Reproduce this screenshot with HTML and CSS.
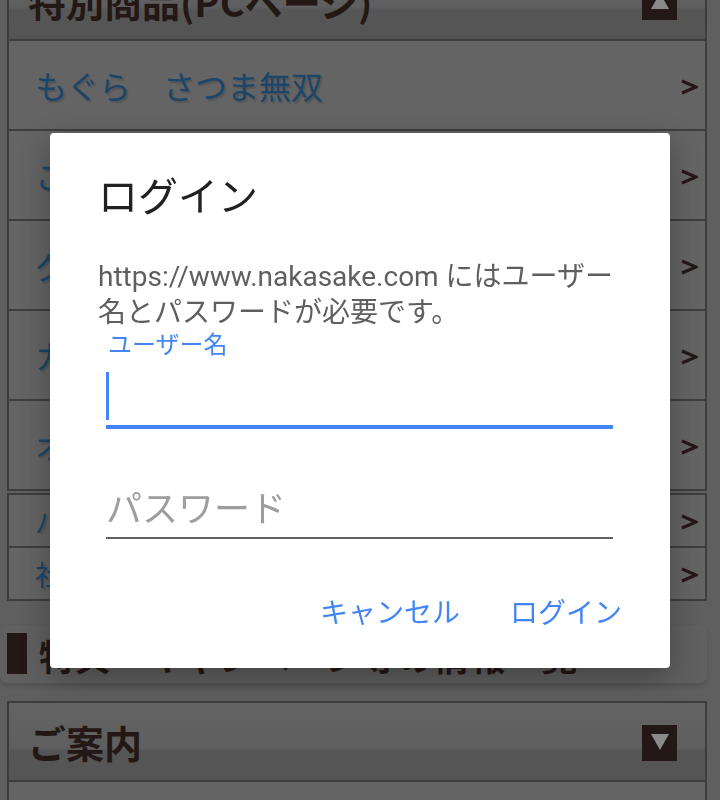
FILE: index.html
```html
<!DOCTYPE html>
<html lang="ja">
<head>
  <meta charset="UTF-8" />
  <meta name="viewport" content="width=device-width, initial-scale=1.0"/>
  <title>ログイン</title>
  <link rel="stylesheet" href="styles.css">
</head>
<body>

  <!-- Page behind the dialog (already dimmed) -->
  <div class="page">
    <section class="menu">
      <div class="menu-head"><h2>特別商品(PCページ)</h2><span class="toggle up"></span></div>
      <a class="menu-row" href="#">もぐら　さつま無双<svg class="chev" viewBox="0 0 18 18"><polyline points="2,3 16,9 2,15"/></svg></a>
      <a class="menu-row" href="#">こだわりの焼酎<svg class="chev" viewBox="0 0 18 18"><polyline points="2,3 16,9 2,15"/></svg></a>
      <a class="menu-row" href="#">グラス・酒器<svg class="chev" viewBox="0 0 18 18"><polyline points="2,3 16,9 2,15"/></svg></a>
      <a class="menu-row" href="#">カタログ<svg class="chev" viewBox="0 0 18 18"><polyline points="2,3 16,9 2,15"/></svg></a>
      <a class="menu-row" href="#">オリジナル商品<svg class="chev" viewBox="0 0 18 18"><polyline points="2,3 16,9 2,15"/></svg></a>
    </section>

    <section class="menu small">
      <a class="menu-row" href="#">バックナンバー<svg class="chev" viewBox="0 0 18 18"><polyline points="2,3 16,9 2,15"/></svg></a>
      <a class="menu-row" href="#">社長のブログ<svg class="chev" viewBox="0 0 18 18"><polyline points="2,3 16,9 2,15"/></svg></a>
    </section>

    <h2 class="section-title">特典・キャンペーン等の情報一覧</h2>

    <section class="menu">
      <div class="menu-head"><h2>ご案内</h2><span class="toggle down"></span></div>
      <a class="menu-row" href="#">会社概要</a>
    </section>
  </div>

  <!-- Login dialog -->
  <div class="overlay">
    <div class="dialog">
      <h1 class="dialog-title">ログイン</h1>
      <p class="dialog-msg">https://www.nakasake.com にはユーザー名とパスワードが必要です。</p>

      <label class="field-label">ユーザー名</label>
      <div class="field focused"><span class="caret"></span></div>

      <div class="field"><span class="placeholder">パスワード</span></div>

      <div class="actions">
        <button class="btn">キャンセル</button>
        <button class="btn">ログイン</button>
      </div>
    </div>
  </div>

</body>
</html>
```

FILE: styles.css
```css
* {
  box-sizing: border-box;
  margin: 0;
  padding: 0;
}

body {
  font-family: "Noto Sans CJK JP", sans-serif;
  background: #5f5f5f;
  height: 800px;
  overflow: hidden;
}

/* page underneath, scrolled a little */
.page {
  margin-top: -40px;
  margin-left: 7px;
  width: 700px;
}

.menu {
  border: 2px solid #3d3d3d;
  background: #646464;
}

.menu.small {
  margin-top: 2px;
}

.menu-head {
  height: 79px;
  display: flex;
  align-items: center;
  justify-content: space-between;
  padding: 0 28px 0 19px;
  background: linear-gradient(#636363 0%, #5f5f5f 58%, #565656 62%, #545454 100%);
  border-bottom: 2px solid #3d3d3d;
}

.menu-head h2 {
  font-size: 38px;
  font-weight: bold;
  color: #231815;
}

.toggle {
  position: relative;
  width: 35px;
  height: 36px;
  background: #231815;
  margin-top: 2px;
}

.toggle::after {
  content: "";
  position: absolute;
  left: 9px;
  top: 9px;
  border-left: 9px solid transparent;
  border-right: 9px solid transparent;
}

.toggle.up::after {
  border-bottom: 16px solid #8a8a8a;
}

.toggle.down::after {
  border-top: 16px solid #8a8a8a;
}

.menu-row {
  display: flex;
  align-items: center;
  justify-content: space-between;
  height: 90px;
  padding: 0 7px 0 26px;
  border-bottom: 2px solid #3d3d3d;
  color: #1b4569;
  font-size: 32px;
  text-decoration: none;
  text-shadow: 2px 2px 1px #565656;
}

.menu-row:last-child {
  border-bottom: none;
  height: 88px;
}

.menu.small .menu-row {
  height: 53px;
  font-size: 28px;
}

.menu.small .menu-row:last-child {
  height: 51px;
}

.chev {
  width: 18px;
  height: 18px;
  margin-top: 3px;
  fill: none;
  stroke: #231815;
  stroke-width: 3;
}

.section-title {
  position: relative;
  margin: 24px 0 16px -7px;
  height: 60px;
  padding: 4px 0 0 39px;
  font-size: 36px;
  font-weight: bold;
  color: #231815;
  border-radius: 8px;
  background: #606060;
  border-bottom: 2px solid #555;
  box-shadow: 0 2px 4px rgba(0,0,0,0.12);
}

.section-title::before {
  content: "";
  position: absolute;
  left: 7px;
  top: 8px;
  width: 20px;
  height: 41px;
  background: #231815;
}

/* dialog */
.overlay {
  position: fixed;
  inset: 0;
  display: flex;
  align-items: center;
  justify-content: center;
}

.dialog {
  width: 620px;
  background: #fff;
  border-radius: 4px;
  padding: 41px 48px 36px;
  box-shadow: 0 10px 30px rgba(0,0,0,0.3);
  font-family: Roboto, "Noto Sans CJK JP", sans-serif;
}

.dialog-title {
  font-size: 40px;
  line-height: 48px;
  font-weight: normal;
  color: #212121;
}

.dialog-msg {
  margin-top: 37px;
  font-size: 28px;
  line-height: 36px;
  color: #5f5f5f;
}

.field-label {
  display: block;
  margin-left: 10px;
  font-size: 24px;
  line-height: 28px;
  color: #4285f4;
}

.field {
  margin: 0 9px 0 8px;
  height: 70px;
  border-bottom: 2px solid #616161;
}

.field.focused {
  border-bottom: 4px solid #4285f4;
  padding-top: 13px;
}

.caret {
  display: block;
  width: 3px;
  height: 48px;
  background: #4285f4;
}

.field .placeholder {
  display: block;
  margin-top: 59px;
  font-size: 36px;
  line-height: 44px;
  color: #9e9e9e;
}

.field + .field {
  height: auto;
  padding-bottom: 5px;
}

.actions {
  display: flex;
  justify-content: flex-end;
  gap: 50px;
  margin-top: 57px;
}

.btn {
  border: none;
  background: none;
  font-family: inherit;
  font-size: 28px;
  line-height: 36px;
  color: #4285f4;
}
```
